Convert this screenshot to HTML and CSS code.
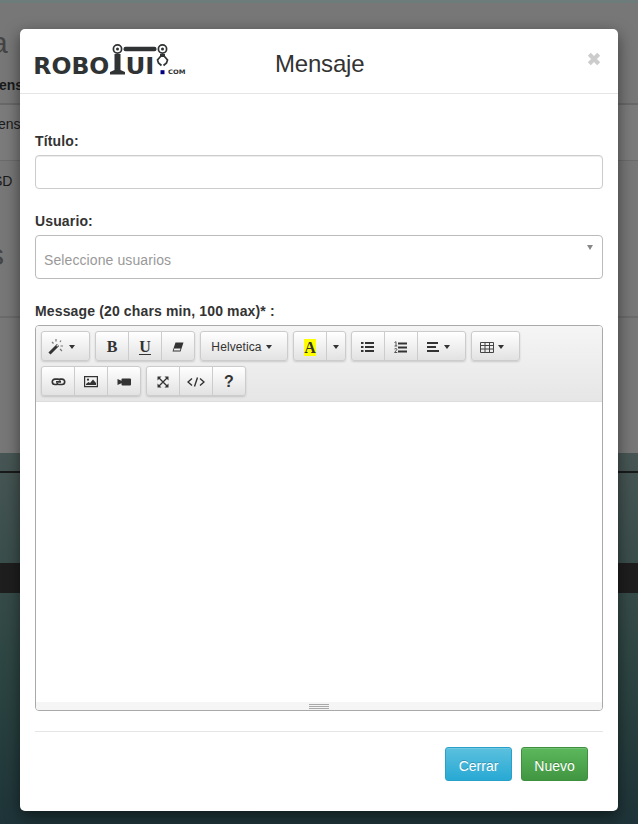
FILE: index.html
```html
<!DOCTYPE html>
<html lang="es">
<head>
<meta charset="utf-8">
<title>Mensaje</title>
<link rel="stylesheet" href="styles.css">
</head>
<body>
<div class="page">
  <div class="strip"></div>
  <div class="listing">
    <div class="heading">a</div>
    <div class="row head">ensaje</div>
    <div class="row striped">ensaje</div>
    <div class="row last">SD</div>
    <div class="subheading">s</div>
  </div>
  <div class="footer"><div class="rule"></div><div class="bar"></div></div>
</div>
<div class="modal">
  <header class="modal-header">
    <svg class="logo" width="152" height="34" viewBox="35 43 152 34">
      <g fill="#303334" font-family="DejaVu Sans" font-weight="bold">
        <text x="33.3" y="74" font-size="23" textLength="76" lengthAdjust="spacingAndGlyphs">ROBO</text>
        <text x="125.4" y="74" font-size="23" textLength="29" lengthAdjust="spacingAndGlyphs">UI</text>
        <text x="168" y="74" font-size="6.2" textLength="17.5" lengthAdjust="spacingAndGlyphs">COM</text>
        <path d="M114.500 54h6V70L125 72V74.500H110V72L114.500 70Z"/>
        <rect x="123.500" y="46.800" width="33" height="4.400" rx="2"/>
        <circle cx="117.500" cy="49" r="1.500"/><circle cx="162.500" cy="49" r="1.500"/>
        <path d="M160 54h5v3h-5z"/>
      </g>
      <g fill="none" stroke="#303334" stroke-width="1.700"><circle cx="117.500" cy="49" r="4.100"/><circle cx="162.500" cy="49" r="4.100"/><path d="M160.500 56.500L157.500 60L158.500 63L161.500 65.500M164.500 56.500L167.500 60L166.500 63L163.500 65.500"/></g>
      <path d="M160.500 70.200h4v4h-4z" fill="#000080"/>
    </svg>
    <h4>Mensaje</h4>
    <svg class="close" width="16" height="16"><path d="M3.300 3.300l9.400 9.400M12.700 3.300l-9.400 9.400" stroke="#ccc" stroke-width="4.200"/></svg>
  </header>
  <main class="modal-body">
    <label>Título:</label>
    <div class="input"></div>
    <label>Usuario:</label>
    <div class="input select"><span>Seleccione usuarios</span><i class="arrow"></i></div>
    <label>Message (20 chars min, 100 max)* :</label>
    <div class="editor">
      <div class="toolbar">
        <div class="group"><div class="btn wand w49"><svg width="17" height="16" viewBox="0 0 17 16"><path d="M1.500 14.500L10 6" stroke="#333" stroke-width="3"/><path d="M8.700 7.300l1.300-1.300" stroke="#ddd" stroke-width="1.300"/><path d="M4 3l1.500 1.500M8 0v2.500M12 3l1-1.500M12.500 7H15M12 10l2 2" stroke="#777" stroke-width="1.200"/></svg><i class="caret"></i></div></div>
        <div class="group"><div class="btn"><b class="serif">B</b></div><div class="btn"><b class="serif under">U</b></div><div class="btn"><svg width="14" height="12"><path d="M4.500 1.500h8L9.500 10.500H1.500Z" fill="#333"/><path d="M3.300 7.500h6.200L9 9.500H2.600Z" fill="#eee"/></svg></div></div>
        <div class="group"><div class="btn w88"><span>Helvetica</span><i class="caret"></i></div></div>
        <div class="group"><div class="btn"><b class="serif mark">A</b></div><div class="btn w20"><i class="caret solo"></i></div></div>
        <div class="group"><div class="btn"><svg width="14" height="12"><path d="M0 2h2.500M4 2h9M0 6h2.500M4 6h9M0 10h2.500M4 10h9" stroke="#333" stroke-width="2"/></svg></div><div class="btn"><svg width="14" height="13"><path d="M4 2.500H13M4 6.500H13M4 10.500H13" stroke="#333" stroke-width="2"/><path d="M.5 1.500L2 .7V5M.5 5H3.300M.5 8Q3 6.500 2.800 8.700L.6 11.500H3.300" stroke="#444" stroke-width=".9" fill="none"/></svg></div><div class="btn left3 w48"><svg width="13" height="12"><path d="M0 2h11M0 6h9M0 10h12" stroke="#333" stroke-width="2"/></svg><i class="caret"></i></div></div>
        <div class="group"><div class="btn left3 w49"><svg width="15" height="13"><path d="M.5 1.500h13v10H.5zM.5 4.500h13M.5 8h13M5 1v10M9.500 1v10" stroke="#444" fill="none"/></svg><i class="caret near"></i></div></div>
        <div class="group"><div class="btn"><svg width="15" height="10"><g fill="none" stroke="#333" stroke-width="1.700"><path d="M6.500 7.500H4a2.700 2.700 0 010-5.400h3a2 2 0 012 1.500M8.500 2.100H11a2.700 2.700 0 010 5.400H8a2 2 0 01-2-1.500"/><path d="M5 4.900h5"/></g></svg></div><div class="btn"><svg width="14" height="12"><path d="M.6.600h12.800v10H.6z" stroke="#333" fill="none" stroke-width="1.200"/><circle cx="4" cy="3.700" r="1.100" fill="#333"/><path d="M2 9V8l2.500-2L6 7l3-3.500L12 7v2z" fill="#333"/></svg></div><div class="btn"><svg width="15" height="10"><path d="M.5 2L5 4V6L.5 8z" fill="#333"/><rect x="4.500" y="1.500" width="9.500" height="7" rx="1" fill="#333"/></svg></div></div>
        <div class="group"><div class="btn"><svg width="12" height="12"><path d="M2 2l8 8M10 2l-8 8" stroke="#333" stroke-width="1.300"/><path d="M.5.500h4l-4 4zM11.500.500v4l-4-4zM.5 11.500v-4l4 4zM11.500 11.500h-4l4-4z" fill="#333"/></svg></div><div class="btn"><svg width="18" height="12"><path d="M5 2.500L1 6l4 3.500M13 2.500L17 6l-4 3.500M10.500 1.500l-3 9" fill="none" stroke="#333" stroke-width="1.400"/></svg></div><div class="btn"><b class="help">?</b></div></div>
      </div>
      <div class="content"></div>
      <div class="resize"><i></i><i></i><i></i></div>
    </div>
    <footer class="actions"><button class="action info">Cerrar</button><button class="action success">Nuevo</button></footer>
  </main>
</div>
</body>
</html>
```
FILE: styles.css
```css
* { box-sizing: border-box; }
body { margin: 0; height: 824px; overflow: hidden; font: 14px/20px "Liberation Sans", Arial, sans-serif; color: #333; }
svg { display: block; flex: none; }
.page { height: 824px; overflow: hidden; color: #1a1a1a; }
.strip { height: 3px; background: #6e7b7b; }
.listing { height: 450px; background: #777; padding-top: 20px; }
.heading, .subheading { font-size: 30px; line-height: 40px; color: #444; text-indent: -9px; height: 52px; }
.row { height: 57px; padding-top: 9px; text-indent: -2px; }
.row.head { height: 30px; padding-top: 0; text-indent: -1px; font-weight: bold; border-bottom: 2px solid #686868; }
.row.striped { background: #7b7b7b; border-bottom: 1px solid #6b6b6b; height: 56px; }
.row.last { text-indent: -7px; padding-top: 10px; }
.subheading { height: 100px; padding-top: 17px; text-indent: -11px; border-bottom: 2px solid #6b6b6b; }
.footer { height: 371px; padding-top: 18px; background: linear-gradient(#475654, #2e4643 55%, #1e3438); }
.rule { height: 2px; background: #191a1a; margin-bottom: 90px; }
.bar { height: 30px; background: #1e1e1e; }
.modal { position: absolute; left: 20px; top: 29px; width: 598px; height: 782px; background: #fff; border-radius: 5px; box-shadow: 0 5px 15px rgba(0,0,0,.5); }
.modal-header { height: 65px; border-bottom: 1px solid #e5e5e5; display: flex; padding: 14px 15px 0; }
h4 { margin: 7px 0 0 88px; font-size: 24px; line-height: 28px; font-weight: normal; letter-spacing: -.2px; }
.close { margin: 8px 1px 0 auto; }
.modal-body { padding: 37px 15px 0; }
label { display: block; height: 24px; font-weight: bold; line-height: 20px; letter-spacing: .14px; }
.input { height: 34px; border: 1px solid #ccc; border-radius: 4px; margin-bottom: 22px; box-shadow: inset 0 1px 1px rgba(0,0,0,.075); }
.select { height: 44px; border-color: #bbb; box-shadow: none; display: flex; justify-content: space-between; padding: 14px 9px 0 8px; color: #999; letter-spacing: .1px; }
.arrow { width: 0; height: 0; border: 3.5px solid transparent; border-top: 5px solid #888; border-bottom: 0; margin-top: -5px; }
.editor { height: 386px; border: 1px solid #a9a9a9; border-radius: 4px; overflow: hidden; }
.toolbar { height: 76px; padding: 5px; display: flex; flex-wrap: wrap; align-content: flex-start; gap: 5px; background: linear-gradient(#f5f5f5, #e6e6e6); border-bottom: 1px solid #ddd; }
.group { height: 30px; display: flex; border: 1px solid #ccc; border-radius: 3px; background: linear-gradient(#fff, #e2e2e2); box-shadow: 0 1px 2px rgba(0,0,0,.15); }
.btn { width: 33px; display: flex; align-items: center; justify-content: center; font-size: 12px; padding-top: 2px; }
.btn + .btn { border-left: 1px solid #ccc; }
.btn:first-child { width: 32px; }
.group .btn:last-child:not(:first-child) { width: 33px; }
.group .w49 { width: 47px; }
.group .w88 { width: 86px; letter-spacing: .1px; padding-right: 5px; }
.group .w20:last-child:not(:first-child) { width: 19px; }
.group .w48:last-child:not(:first-child) { width: 48px; }
.wand { padding-right: 8px; }
.left3 { padding-right: 7px; }
.caret { width: 0; height: 0; border: 3px solid transparent; border-top: 4px solid #333; border-bottom: 0; margin-left: 4px; }
.caret.solo { margin-left: 0; }
.caret.near { margin-left: 3px; }
.serif { font: bold 16px/18px "Liberation Serif", serif; }
.under { border-bottom: 1px solid #333; line-height: 14px; }
.mark { background: #ff0; line-height: 17px; }
.help { font-size: 16px; }
.content { height: 300px; background: #fff; }
.resize { height: 8px; background: #f5f5f5; padding-top: 2px; }
.resize i { display: block; width: 20px; height: 1px; margin: 0 auto 1px; background: #a9a9a9; }
.actions { margin-top: 20px; border-top: 1px solid #e5e5e5; padding: 15px 15px 0; display: flex; justify-content: flex-end; gap: 9px; }
.action { width: 67px; height: 34px; border: 1px solid #28a1c9; border-radius: 3px; padding: 3px 0 0; color: #fff; font: 14px "Liberation Sans", sans-serif; background: linear-gradient(#5bc0de, #28a9d4); box-shadow: inset 0 1px 0 rgba(255,255,255,.15); text-shadow: 0 -1px 0 rgba(0,0,0,.2); }
.success { border-color: #3e8f3e; background: linear-gradient(#5cb85c, #419641); }
```
